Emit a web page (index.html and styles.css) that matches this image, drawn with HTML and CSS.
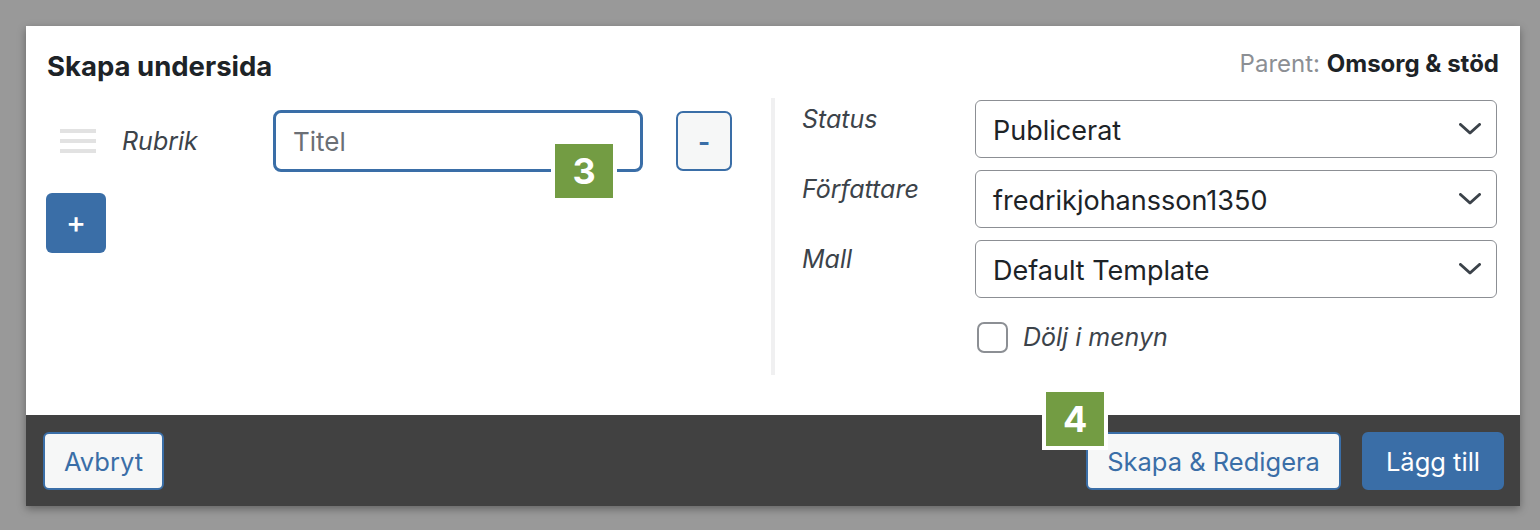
FILE: index.html
```html
<!DOCTYPE html>
<html lang="sv">
<head>
<meta charset="utf-8">
<title>Skapa undersida</title>
<link rel="stylesheet" href="styles.css">
</head>
<body>
<div class="backdrop">
  <div class="modal">
    <div class="modal-main">
      <header class="modal-header">
        <h2 class="modal-title">Skapa undersida</h2>
        <div class="parent">Parent: <strong>Omsorg &amp; stöd</strong></div>
      </header>
      <div class="modal-body">
        <div class="pages">
          <div class="page-row">
            <span class="handle" aria-hidden="true"><i></i><i></i><i></i></span>
            <label class="row-label" for="titel">Rubrik</label>
            <div class="input-wrap">
              <input id="titel" class="title-input" type="text" placeholder="Titel">
              <span class="badge badge-3">3</span>
            </div>
            <button class="btn-remove" type="button">-</button>
          </div>
          <button class="btn-add" type="button">+</button>
        </div>
        <div class="settings">
          <div class="field-label">Status</div>
          <div class="select"><span>Publicerat</span><svg class="chev" width="22" height="12" viewBox="0 0 22 12"><polyline points="1.5,1.5 11,10 20.5,1.5" fill="none" stroke="#3c434a" stroke-width="3" stroke-linecap="round" stroke-linejoin="round"/></svg></div>
          <div class="field-label">Författare</div>
          <div class="select"><span>fredrikjohansson1350</span><svg class="chev" width="22" height="12" viewBox="0 0 22 12"><polyline points="1.5,1.5 11,10 20.5,1.5" fill="none" stroke="#3c434a" stroke-width="3" stroke-linecap="round" stroke-linejoin="round"/></svg></div>
          <div class="field-label">Mall</div>
          <div class="select"><span>Default Template</span><svg class="chev" width="22" height="12" viewBox="0 0 22 12"><polyline points="1.5,1.5 11,10 20.5,1.5" fill="none" stroke="#3c434a" stroke-width="3" stroke-linecap="round" stroke-linejoin="round"/></svg></div>
          <label class="check-row"><span class="checkbox"></span><span class="check-label">Dölj i menyn</span></label>
        </div>
      </div>
    </div>
    <footer class="modal-footer">
      <button class="btn btn-secondary" type="button">Avbryt</button>
      <div class="actions">
        <div class="badge-anchor">
          <span class="badge badge-4">4</span>
          <button class="btn btn-secondary" type="button">Skapa &amp; Redigera</button>
        </div>
        <button class="btn btn-primary" type="button">Lägg till</button>
      </div>
    </footer>
  </div>
</div>
</body>
</html>
```
FILE: styles.css
```css
* { box-sizing: border-box; }
html, body { margin: 0; padding: 0; }
body {
  background: #999999;
  font-family: Inter, Roboto, "Liberation Sans", Arial, sans-serif;
  color: #1d2327;
  width: 1540px;
  height: 530px;
  overflow: hidden;
}
.backdrop {
  padding: 26px 20px 24px 26px;
}
.modal {
  width: 1494px;
  background: #fff;
  box-shadow: 0 3px 8px rgba(0,0,0,0.35);
}
.modal-main {
  height: 389px;
}
.modal-header {
  display: flex;
  justify-content: space-between;
  align-items: flex-start;
  padding: 23px 21px 0 21px;
}
.modal-title {
  margin: 0;
  font-size: 27.5px;
  line-height: 34px;
  font-weight: 700;
  color: #1d2327;
}
.parent {
  margin-top: 1px;
  font-size: 24px;
  line-height: 28px;
  color: #8c8f94;
}
.parent strong { color: #1d2327; font-weight: 700; }

.modal-body {
  display: flex;
  padding: 15px 21px 0 21px;
}
.pages {
  width: 724px;
  padding-top: 12px;
}
.page-row {
  display: flex;
  align-items: center;
  height: 62px;
}
.handle {
  display: flex;
  flex-direction: column;
  gap: 6px;
  width: 36px;
  margin-left: 13px;
}
.handle i {
  display: block;
  height: 4px;
  background: #e2e2e2;
}
.row-label {
  width: 151px;
  margin-left: 26px;
  font-size: 25px;
  font-style: italic;
  color: #3c434a;
}
.input-wrap {
  position: relative;
  width: 370px;
  height: 62px;
}
.title-input {
  width: 100%;
  height: 100%;
  border: 3px solid #3a6ea7;
  border-radius: 8px;
  padding: 0 17px;
  font-family: inherit;
  font-size: 26px;
  color: #1d2327;
  outline: none;
  background: #fff;
}
.title-input::placeholder { color: #6b6f75; }
.btn-remove {
  margin-left: 33px;
  width: 56px;
  height: 60px;
  border: 2px solid #3a6ea7;
  border-radius: 7px;
  background: #f6f7f7;
  color: #3a6ea7;
  font-family: inherit;
  font-size: 26px;
  font-weight: 700;
  padding: 0;
}
.btn-add {
  display: block;
  margin-top: 21px;
  margin-left: -1px;
  width: 60px;
  height: 60px;
  border: 0;
  border-radius: 6px;
  background: #3a6ea7;
  color: #fff;
  font-family: inherit;
  font-size: 30px;
  font-weight: 500;
  padding: 0 0 3px 0;
}

.badge {
  position: absolute;
  width: 66px;
  height: 62px;
  border: 4px solid #fff;
  background: #739c43;
  color: #fff;
  font-size: 36px;
  font-weight: 700;
  display: flex;
  align-items: center;
  justify-content: center;
  line-height: 1;
}
.badge-3 { left: 278px; top: 30px; }
.badge-4 { left: -44px; top: -44px; z-index: 1; }

.settings {
  flex: 1;
  height: 277px;
  border-left: 4px solid #f0f0f1;
  padding: 2px 0 0 27px;
  display: grid;
  grid-template-columns: 173px 522px;
  grid-auto-rows: 58px;
  row-gap: 12px;
  align-content: start;
}
.field-label {
  padding-top: 4px;
  font-size: 25px;
  line-height: 30px;
  font-style: italic;
  color: #3c434a;
}
.select {
  display: flex;
  align-items: center;
  justify-content: space-between;
  border: 1px solid #8c8f94;
  border-radius: 6px;
  padding: 2px 15px 0 17px;
  font-size: 27px;
  color: #1d2327;
  background: #fff;
}
.chev { display: block; margin-top: -2px; }
.check-row {
  grid-column: 2;
  display: flex;
  align-items: center;
  margin-top: 12px;
  height: 30px;
  padding-left: 2px;
}
.checkbox {
  width: 31px;
  height: 31px;
  border: 2px solid #8c8f94;
  border-radius: 7px;
  background: #fff;
}
.check-label {
  margin-left: 15px;
  font-size: 25px;
  font-style: italic;
  color: #3c434a;
}

.modal-footer {
  height: 91px;
  background: #414141;
  display: flex;
  align-items: center;
  justify-content: space-between;
  padding: 1px 16px 0 17px;
}
.actions {
  display: flex;
  align-items: center;
  gap: 21px;
}
.badge-anchor { position: relative; }
.btn {
  height: 58px;
  border-radius: 6px;
  font-family: inherit;
  font-size: 25.5px;
  padding: 0 19px;
}
.btn-secondary {
  border: 2px solid #3a6ea7;
  background: #f6f7f7;
  color: #3a6ea7;
}
.btn-primary {
  border: 2px solid #3a6ea7;
  background: #3a6ea7;
  color: #fff;
  padding: 0 22px;
}
```
